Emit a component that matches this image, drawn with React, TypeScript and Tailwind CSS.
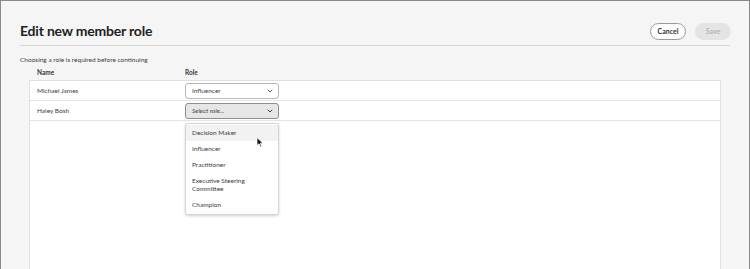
import { ChevronDown } from "lucide-react";

const roles = ["Decision Maker", "Influencer", "Practitioner", "Executive Steering Committee", "Champion"];

function Cursor() {
  return (
    <svg className="absolute left-[70px] top-[13px]" width="8" height="11" viewBox="0 0 8 11">
      <path d="M1 0.5 L1 8.5 L3 6.8 L4.4 10 L5.6 9.5 L4.3 6.4 L7 6.4 Z" fill="#111" stroke="#fff" strokeWidth="0.8" />
    </svg>
  );
}

export default function App() {
  return (
    <div className="h-[269px] w-[750px] overflow-hidden border-x border-t border-[#8a8a8a] bg-[#f5f5f5] font-['Lato',sans-serif] text-[#3d3d3d]">
      <div className="flex items-center justify-between pl-[19px] pr-[18px] pt-[21px]">
        <h1 className="text-[14px] font-bold leading-[18px] tracking-[-0.2px] text-[#222]">Edit new member role</h1>
        <div className="flex gap-[9px]">
          <button className="h-[17px] w-[36px] rounded-full border border-[#9a9a9a] bg-white text-[7px] font-bold text-[#333]">
            Cancel
          </button>
          <button className="h-[17px] w-[36px] rounded-full bg-[#e4e4e4] text-[7px] font-bold text-[#b5b5b5]">Save</button>
        </div>
      </div>
      <div className="mx-[19px] mt-[5px] h-px bg-[#d6d6d6]" />
      <p className="ml-[19px] mt-[9px] text-[6.5px] leading-[9px]">Choosing a role is required before continuing</p>
      <div className="ml-[36px] mt-[4px] flex text-[6.5px] font-bold leading-[9px] text-[#333]">
        <span className="w-[148px]">Name</span>
        <span>Role</span>
      </div>
      <div className="ml-[28px] mr-[28px] mt-[3px] h-[200px] border border-[#e0e0e0] bg-white text-[6.5px]">
        <div className="flex h-[20px] items-center border-b border-[#e4e4e4] pl-[7px]">
          <span className="w-[148px]">Michael James</span>
          <div className="flex h-[16px] w-[94px] items-center justify-between rounded-[3px] border border-[#b8b8b8] bg-white pl-[6px] pr-[4px]">
            <span>Influencer</span>
            <ChevronDown size={8} strokeWidth={2.5} />
          </div>
        </div>
        <div className="flex h-[20px] items-center border-b border-[#e4e4e4] pl-[7px]">
          <span className="w-[148px]">Haley Bosh</span>
          <div className="flex h-[16px] w-[94px] items-center justify-between rounded-[3px] border border-[#8e8e8e] bg-[#e6e6e6] pl-[6px] pr-[4px]">
            <span className="italic">Select role...</span>
            <ChevronDown size={8} strokeWidth={3} />
          </div>
        </div>
        <div className="relative ml-[155px] mt-[2px] w-[94px] rounded-[3px] border border-[#d4d4d4] bg-white py-[1px] shadow-[0_1px_3px_rgba(0,0,0,0.18)]">
          {roles.map((r, i) => (
            <div
              key={r}
              className={`flex items-center px-[6px] leading-[8px] ${i === 0 ? "bg-[#f2f2f2]" : ""} ${
                r.startsWith("Executive") ? "h-[24px] pr-[20px]" : "h-[16px]"
              }`}
            >
              {r}
            </div>
          ))}
          <Cursor />
        </div>
      </div>
    </div>
  );
}
